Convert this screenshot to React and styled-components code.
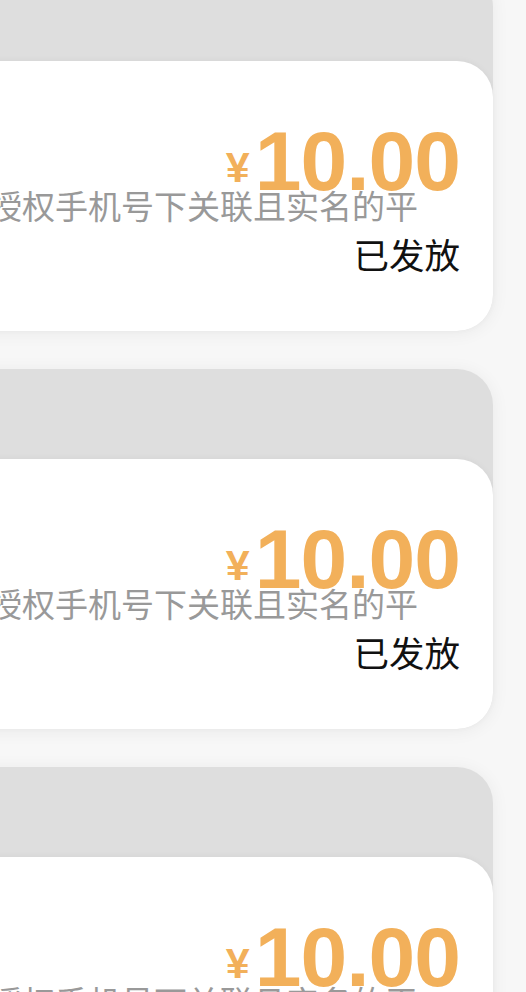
import React from 'react';
import styled, { createGlobalStyle } from 'styled-components';

const GlobalStyle = createGlobalStyle`
  html, body {
    margin: 0;
    padding: 0;
    background: #f7f7f7;
    overflow: hidden;
  }
  body {
    font-family: "Liberation Sans", "Noto Sans CJK SC", sans-serif;
  }
`

const Page = styled.div`
  width: 526px;
  height: 992px;
  overflow: hidden;
  background: #f7f7f7;
`

const List = styled.div`
  display: flex;
  flex-direction: column;
  gap: 38px;
  margin-top: -29px;
`

const Card = styled.div`
  margin: 0 33px 0 -60px;
  background: #dedede;
  border-radius: 36px;
  padding-top: 90px;
  box-shadow: 0 2px 18px rgba(0, 0, 0, 0.06);
`

const Body = styled.div`
  height: 270px;
  box-sizing: border-box;
  background: #fff;
  border-radius: 36px;
  padding: 68px 33px 0 49px;
  display: flex;
  flex-direction: column;
  box-shadow: 0 -1px 6px rgba(0, 0, 0, 0.04);
`

const Price = styled.div`
  align-self: flex-end;
  color: #f2b05a;
  font-family: "Liberation Sans", Arial, sans-serif;
  font-weight: bold;
  font-size: 84px;
  line-height: 64px;
  letter-spacing: -1px;
  white-space: nowrap;
`

const Yen = styled.span`
  font-size: 43px;
  letter-spacing: 0;
  margin-right: 5px;
  vertical-align: 8px;
`

const Desc = styled.div`
  color: #999;
  font-family: "Noto Sans CJK SC", sans-serif;
  font-size: 33px;
  line-height: 32px;
  white-space: nowrap;
  margin-top: -10px;
`

const Status = styled.div`
  align-self: flex-end;
  color: #111;
  font-family: "Noto Sans CJK SC", sans-serif;
  font-size: 35.5px;
  line-height: 34px;
  margin-top: 16px;
`

const coupons = [
  { id: 1, amount: '10.00', desc: '授权手机号下关联且实名的平', status: '已发放' },
  { id: 2, amount: '10.00', desc: '授权手机号下关联且实名的平', status: '已发放' },
  { id: 3, amount: '10.00', desc: '授权手机号下关联且实名的平', status: '已发放' },
]

const Coupon = ({ amount, desc, status }) => (
  <Card>
    <Body>
      <Price><Yen>¥</Yen>{amount}</Price>
      <Desc>{desc}</Desc>
      <Status>{status}</Status>
    </Body>
  </Card>
)

export default function App() {
  return (
    <Page>
      <GlobalStyle />
      <List>
        {coupons.map(c => (
          <Coupon key={c.id} {...c} />
        ))}
      </List>
    </Page>
  )
}
